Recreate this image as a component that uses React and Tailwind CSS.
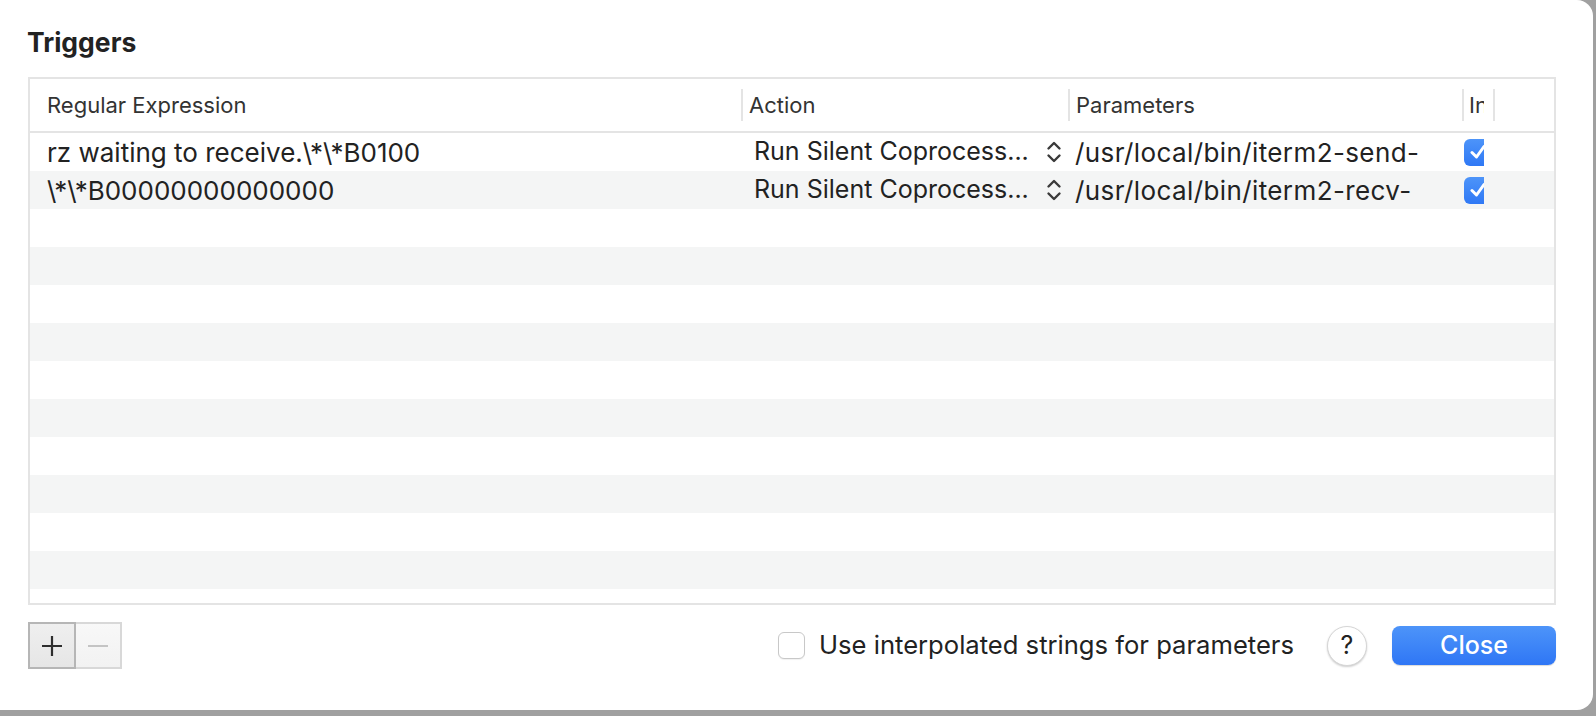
const rows = [
  { expr: 'rz waiting to receive.\\*\\*B0100', action: 'Run Silent Coprocess...', params: '/usr/local/bin/iterm2-send-', on: true },
  { expr: '\\*\\*B00000000000000', action: 'Run Silent Coprocess...', params: '/usr/local/bin/iterm2-recv-', on: true },
  ...Array.from({ length: 11 }, () => null),
]

const font = { fontFamily: 'Inter, "Noto Sans", sans-serif' }

const Chevrons = () => (
  <svg width="16" height="26" viewBox="0 0 16 26" fill="none" stroke="#3a3a3a" strokeWidth="2.4" strokeLinecap="round" strokeLinejoin="round">
    <path d="M2.5 9.5 L8 4 L13.5 9.5" />
    <path d="M2.5 16.5 L8 22 L13.5 16.5" />
  </svg>
)

const CheckBox = () => (
  <div className="w-[20px] h-[27px] overflow-hidden">
    <div className="w-[27px] h-[27px] rounded-[6px] bg-gradient-to-b from-[#4d94f9] to-[#2f78f5] flex items-center justify-center">
      <svg width="20" height="20" viewBox="0 0 20 20" fill="none" stroke="white" strokeWidth="3" strokeLinecap="round" strokeLinejoin="round">
        <path d="M4 10.5 L8.5 15 L16 4.5" />
      </svg>
    </div>
  </div>
)

const HeaderCell = ({ w, label, sep }) => (
  <div className={`${w} h-full flex items-center shrink-0`}>
    {sep && <div className="w-[2px] h-[32px] bg-[#e4e4e4]" />}
    <span className={sep ? 'pl-[6px]' : 'pl-[17px]'}>{label}</span>
  </div>
)

export default function App() {
  return (
    <div className="w-[1596px] h-[716px] bg-[#a0a0a0] overflow-hidden" style={font}>
      <div className="w-[1593px] h-[710px] bg-white rounded-r-[16px] pl-[28px] pr-[37px] flex flex-col">
        <h1 className="pt-[27px] h-[57px] leading-[30px] text-[26.5px] font-bold text-[#222] -ml-[1px]">Triggers</h1>

        <div className="mt-[20px] w-[1528px] h-[528px] border-2 border-[#e4e4e4] overflow-hidden flex flex-col">
          <div className="h-[54px] shrink-0 border-b-2 border-[#e4e4e4] flex items-center text-[22px] text-[#333] whitespace-nowrap overflow-hidden">
            <HeaderCell w="w-[711px]" label="Regular Expression" />
            <HeaderCell w="w-[327px]" label="Action" sep />
            <HeaderCell w="w-[394px]" label="Parameters" sep />
            <div className="w-[33px] h-full flex items-center shrink-0 overflow-hidden">
              <div className="w-[2px] h-[32px] bg-[#e4e4e4] shrink-0" />
              <span className="ml-[5px] w-[15px] overflow-hidden shrink-0">In</span>
              <div className="ml-auto w-[2px] h-[32px] bg-[#e4e4e4] shrink-0" />
            </div>
          </div>

          <div className="flex flex-col">
            {rows.map((r, i) => (
              <div
                key={i}
                className={`h-[38px] shrink-0 flex items-center text-[26px] text-[#222] whitespace-nowrap ${i % 2 === 1 ? 'bg-[#f4f5f5]' : 'bg-white'}`}
              >
                {r && (
                  <>
                    <div className="w-[711px] pl-[17px] shrink-0">{r.expr}</div>
                    <div className="w-[327px] pl-[13px] pr-[6px] shrink-0 flex items-center justify-between text-[25px]">
                      <span>{r.action}</span>
                      <Chevrons />
                    </div>
                    <div className="w-[394px] pl-[7px] shrink-0 overflow-hidden tracking-[0.4px]">{r.params}</div>
                    <div className="pl-[2px]">{r.on && <CheckBox />}</div>
                  </>
                )}
              </div>
            ))}
          </div>
        </div>

        <div className="mt-[17px] h-[47px] flex items-center">
          <div className="flex">
            <button className="w-[48px] h-[47px] border-2 border-[#b6b6b6] bg-gradient-to-b from-[#efefef] to-[#e6e6e6] flex items-center justify-center">
              <svg width="22" height="22" viewBox="0 0 22 22" stroke="#2e2e2e" strokeWidth="2.2">
                <path d="M11 1 V21 M1 11 H21" />
              </svg>
            </button>
            <button className="w-[46px] h-[47px] border-2 border-l-0 border-[#d8d8d8] bg-gradient-to-b from-[#f8f8f8] to-[#f2f2f2] flex items-center justify-center">
              <svg width="22" height="22" viewBox="0 0 22 22" stroke="#c4c4c4" strokeWidth="2">
                <path d="M1 11 H21" />
              </svg>
            </button>
          </div>

          <div className="ml-auto flex items-center">
            <div className="w-[27px] h-[27px] rounded-[6px] border border-[#c8c8c8] bg-white shadow-[0_1px_1px_rgba(0,0,0,0.06)]" />
            <span className="ml-[14px] text-[25.6px] text-[#222]">Use interpolated strings for parameters</span>
            <div className="ml-[33px] w-[40px] h-[40px] rounded-full bg-white border border-[#d6d6d6] shadow-[0_1px_2px_rgba(0,0,0,0.2)] flex items-center justify-center text-[25px] text-[#222]">
              ?
            </div>
            <button className="ml-[25px] w-[164px] h-[39px] rounded-[8px] bg-gradient-to-b from-[#4d94f9] to-[#2f76f5] text-white text-[25px] font-medium shadow-[0_1px_1px_rgba(0,0,0,0.15)]">
              Close
            </button>
          </div>
        </div>
      </div>
    </div>
  )
}
